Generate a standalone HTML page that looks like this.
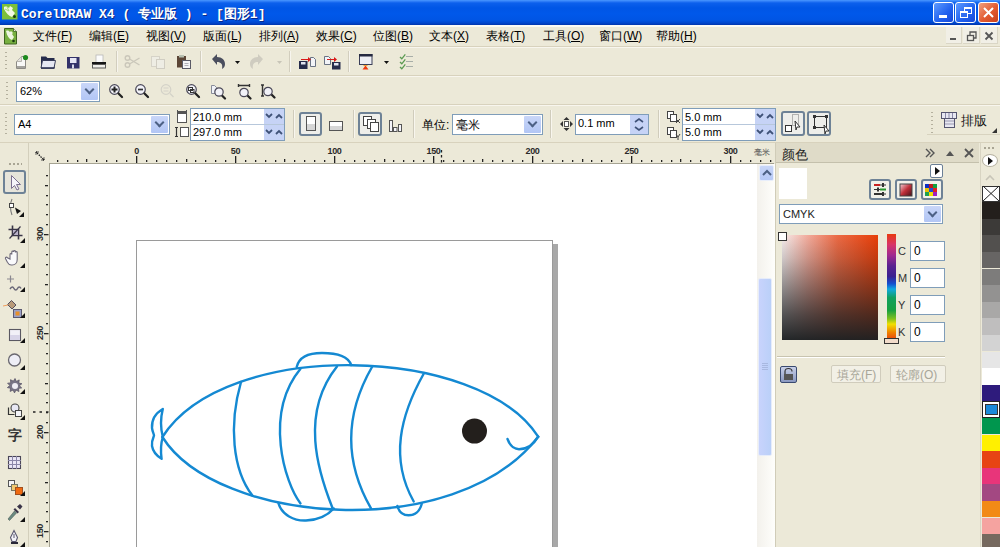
<!DOCTYPE html>
<html><head><meta charset="utf-8">
<style>
*{box-sizing:border-box;margin:0;padding:0}
html,body{width:1000px;height:547px;overflow:hidden;background:#ECE9D8;font-family:"Liberation Sans",sans-serif;font-size:12px;color:#000}
.a{position:absolute}
svg{position:absolute;overflow:visible}
#title{left:0;top:0;width:1000px;height:25px;background:linear-gradient(#4A98FF 0px,#2C7BF6 1.5px,#0C60EC 3px,#0056E6 8px,#0058EA 14px,#0055E4 20px,#0046CC 23px,#0034AC 25px)}
.ttxt{position:absolute;top:5px;font-family:"Liberation Mono",monospace;font-weight:bold;font-size:13px;color:#fff;white-space:pre;text-shadow:1px 1px 0 #0A2A8A;letter-spacing:0px}
.xpb{position:absolute;top:2px;width:21px;height:21px;border:1px solid #fff;border-radius:3px;background:linear-gradient(135deg,#5E9BFF,#2060EE 60%,#1848D8)}
.hl{position:absolute;height:1px;background:#D8D2BD}
.vl{position:absolute;width:1px;background:#D0CCBC}
.vlw{position:absolute;width:1px;background:#F8F6EE}
.grip{position:absolute;width:2px;background:repeating-linear-gradient(#B4B09E 0 1.5px,transparent 1.5px 4px)}
.combo{position:absolute;background:#fff;border:1px solid #7F9DB9}
.dd{position:absolute;right:1px;top:1px;bottom:1px;width:17px;background:linear-gradient(#C9D6F8,#B2C6F5);border-radius:1px}
.dd:after{content:"";position:absolute;left:5px;top:3px;width:5px;height:5px;border-right:2px solid #4D6185;border-bottom:2px solid #4D6185;transform:rotate(45deg)}
.menu span{position:absolute;top:27.5px;font-size:12px;white-space:pre;color:#000}
.ctext{position:absolute;font-size:12px;white-space:pre;color:#000}
.pbtn{position:absolute;border:2px solid #6E8296;border-radius:3px;background:#E3E0D3}
.rnum{position:absolute;font-size:9px;font-weight:bold;color:#2A2A2A;white-space:pre;letter-spacing:-0.3px}
.sw{position:absolute;left:982px;width:18px;height:17px}
</style></head><body>
<!-- ===== title bar ===== -->
<div id="title" class="a"></div>
<svg width="16" height="16" style="left:2px;top:4px"><rect x="0" y="0" width="15.5" height="15.5" fill="#7CC03A"/><path d="M2 3c2-1 4 0 5 1l1-2 3 2-1 2 3 3-3 4c-3-1-6-4-8-8z" fill="#F2F8E4"/><path d="M3 5l4 2M5 3l2 4" stroke="#A8D878" stroke-width="1"/><circle cx="12.5" cy="12.5" r="1.5" fill="#1A3A10"/></svg>
<div class="ttxt" style="left:21px">CorelDRAW X4 ( 专业版 ) - [图形1]</div>
<div class="xpb" style="left:933px"><div class="a" style="left:5px;top:12px;width:8px;height:3px;background:#fff"></div></div>
<div class="xpb" style="left:955px"><div class="a" style="left:8px;top:4px;width:8px;height:7px;border:1px solid #fff;border-top-width:2px"></div><div class="a" style="left:4px;top:8px;width:8px;height:7px;border:1px solid #fff;border-top-width:2px;background:#2F6DF0"></div></div>
<div class="xpb" style="left:978px;background:linear-gradient(135deg,#F0A080,#E25A30 55%,#C8401C)"><svg width="21" height="21" style="left:-1px;top:-1px"><path d="M6 6L15 15M15 6L6 15" stroke="#fff" stroke-width="2"/></svg></div>

<!-- ===== menu bar ===== -->
<div class="a" style="left:0;top:25px;width:1000px;height:1.5px;background:#FBFAF4"></div>
<div class="menu">
<svg width="14" height="17" style="left:3.5px;top:27.5px"><path d="M0.5 0.5h9l3 3v12.5h-12z" fill="#78B040" stroke="#3E6420"/><path d="M9.5 0.5v3h3" fill="#E8F0D8" stroke="#3E6420" stroke-width="0.8"/><path d="M2 3c2-1 3 0 4 1l1-1 2 2-1 1 2 3-2 3c-3-1-5-4-6-9z" fill="#EEF6E0"/><circle cx="9.5" cy="13" r="1.3" fill="#1A3A10"/></svg>
<span style="left:33px">文件(<u>F</u>)</span>
<span style="left:89px">编辑(<u>E</u>)</span>
<span style="left:146px">视图(<u>V</u>)</span>
<span style="left:203px">版面(<u>L</u>)</span>
<span style="left:259px">排列(<u>A</u>)</span>
<span style="left:316px">效果(<u>C</u>)</span>
<span style="left:373px">位图(<u>B</u>)</span>
<span style="left:429px">文本(<u>X</u>)</span>
<span style="left:486px">表格(<u>T</u>)</span>
<span style="left:543px">工具(<u>O</u>)</span>
<span style="left:599px">窗口(<u>W</u>)</span>
<span style="left:656px">帮助(<u>H</u>)</span>
</div>
<div class="a" style="left:946px;top:27px;width:16px;height:17px;background:#F1EFE6;border-right:1px solid #DAD6C6;border-bottom:1px solid #DAD6C6"></div>
<div class="a" style="left:963px;top:27px;width:17px;height:17px;background:#F1EFE6;border-right:1px solid #DAD6C6;border-bottom:1px solid #DAD6C6"></div>
<div class="a" style="left:981px;top:27px;width:17px;height:17px;background:#F1EFE6;border-right:1px solid #DAD6C6;border-bottom:1px solid #DAD6C6"></div>
<svg width="60" height="20" style="left:940px;top:26px">
<rect x="10" y="12" width="6" height="2" fill="#555"/>
<rect x="27.5" y="9.5" width="6" height="5" fill="none" stroke="#555" stroke-width="1.3"/><path d="M30 9V6h6v6h-2" fill="none" stroke="#555" stroke-width="1.3"/>
<path d="M45.5 6.5l7 7M52.5 6.5l-7 7" stroke="#555" stroke-width="1.8"/>
</svg>

<!-- ===== toolbar lines ===== -->
<div class="hl" style="left:0;top:46px;width:1000px;background:#D8D2BD"></div>
<div class="hl" style="left:0;top:47px;width:1000px;background:#F8F6EE"></div>
<div class="hl" style="left:0;top:75px;width:1000px"></div>
<div class="hl" style="left:0;top:76px;width:1000px;background:#F8F6EE"></div>
<div class="hl" style="left:0;top:104px;width:1000px"></div>
<div class="hl" style="left:0;top:105px;width:1000px;background:#F8F6EE"></div>
<div class="hl" style="left:0;top:142px;width:1000px"></div>
<div class="grip" style="left:5px;top:52px;height:18px"></div>
<div class="grip" style="left:6px;top:82px;height:18px"></div>
<div class="grip" style="left:5px;top:113px;height:22px"></div>

<!-- std toolbar icons -->
<svg width="420" height="30" style="left:0;top:47px">
 <!-- new -->
 <path d="M16.5 14.5l5-5h4v12h-9z" fill="#F8F8F6" stroke="#8C8A84" stroke-width="1"/>
 <path d="M17 20h8" stroke="#6A6862" stroke-width="1.2"/>
 <path d="M16.5 14.5h5v-5" fill="#E4E2DC" stroke="#A8A6A0" stroke-width="0.8"/>
 <circle cx="25.5" cy="10.5" r="2.6" fill="#1E8A1E"/>
 <!-- open -->
 <path d="M41 9.5h5l1.5 1.5h7v10.5H41z" fill="#262C4C"/>
 <path d="M42.5 13.5h13l-1.5 7.5H41z" fill="#E6E8F2" stroke="#2C3250" stroke-width="0.9"/>
 <path d="M41 21h13.5" stroke="#262C4C" stroke-width="1.2"/>
 <!-- save -->
 <rect x="67" y="10" width="12.5" height="11.5" fill="#33326A"/>
 <rect x="70" y="11" width="6.5" height="5" fill="#E6E6F4"/>
 <rect x="72" y="17.5" width="2" height="4" fill="#D8D8E8"/>
 <!-- print -->
 <rect x="96" y="8" width="7" height="7.5" fill="#FBFBFB" stroke="#B8B8B8" stroke-width="0.8"/>
 <rect x="92" y="15" width="14" height="2.5" fill="#151515"/>
 <rect x="92.5" y="17.5" width="13" height="3.5" fill="#F0EFEA" stroke="#5A5A58" stroke-width="1"/>
 <line x1="116.5" y1="4" x2="116.5" y2="25" stroke="#D2CEBE"/><line x1="117.5" y1="4" x2="117.5" y2="25" stroke="#F7F5EE"/>
 <!-- cut disabled -->
 <g stroke="#CAC7BA" fill="none" stroke-width="1.4"><circle cx="127.5" cy="11" r="2.3"/><circle cx="127.5" cy="18" r="2.3"/><path d="M129.5 12l10 6M129.5 17l10-6"/></g>
 <!-- copy disabled -->
 <rect x="151.5" y="9.5" width="8" height="10" fill="#EEEDE4" stroke="#D6D3C8"/><rect x="156.5" y="12.5" width="8" height="9" fill="#EEEDE4" stroke="#D0CDC2"/>
 <!-- paste -->
 <rect x="177" y="9" width="9" height="11.5" fill="#5C4636"/><rect x="179" y="8" width="5" height="2.5" fill="#B8C0B0"/>
 <rect x="182.5" y="13.5" width="8" height="8" fill="#F4F4F6" stroke="#5A5A66"/><path d="M184.5 16.5h4M184.5 18.5h4" stroke="#B0B0B8"/>
 <line x1="200.5" y1="4" x2="200.5" y2="25" stroke="#D2CEBE"/><line x1="201.5" y1="4" x2="201.5" y2="25" stroke="#F7F5EE"/>
 <!-- undo -->
 <path d="M212 12l5-5v3c5 0 8 3 8 7 0 2-1 4-3 5 1-5-1-7-5-7v3z" fill="#4A4E5E"/>
 <path d="M235 14h5l-2.5 3z" fill="#111"/>
 <!-- redo disabled -->
 <path d="M263 12l-5-5v3c-5 0-8 3-8 7 0 2 1 4 3 5-1-5 1-7 5-7v3z" fill="#CFCCC0"/>
 <path d="M277 14h5l-2.5 3z" fill="#C8C5B8"/>
 <line x1="289.5" y1="4" x2="289.5" y2="25" stroke="#D2CEBE"/><line x1="290.5" y1="4" x2="290.5" y2="25" stroke="#F7F5EE"/>
 <!-- import -->
 <path d="M310.5 10.5h3l2 2v7h-5z" fill="#F2F4F8" stroke="#5A6478" stroke-width="0.9"/>
 <rect x="299" y="14" width="8.5" height="8" fill="#262C4C"/><rect x="301" y="15" width="4.5" height="2.5" fill="#E0E4F0"/>
 <path d="M301 12h7v-2l3 2.5-3 2.5v-2h-7z" fill="#D81818"/>
 <!-- export -->
 <path d="M324.5 9.5h4l2 2v6h-6z" fill="#F2F4F8" stroke="#5A6478" stroke-width="0.9"/>
 <rect x="332" y="15" width="8.5" height="7.5" fill="#262C4C"/><rect x="334" y="16" width="4.5" height="2.5" fill="#E0E4F0"/>
 <path d="M327 12h7v-2l3 2.5-3 2.5v-2h-7z" fill="#D81818"/>
 <line x1="348.5" y1="4" x2="348.5" y2="25" stroke="#D2CEBE"/><line x1="349.5" y1="4" x2="349.5" y2="25" stroke="#F7F5EE"/>
 <!-- app launcher -->
 <rect x="359.5" y="7.5" width="12.5" height="10" fill="#EEEFF4" stroke="#3A3E58" stroke-width="1"/>
 <rect x="359" y="7" width="13.5" height="2.5" fill="#262A40"/>
 <path d="M362.5 22.5l3-4 3 4z" fill="#F03A10"/><path d="M363.5 18.5h4" stroke="#F0A030" stroke-width="1"/>
 <path d="M384 14h5l-2.5 3z" fill="#111"/>
 <!-- checklist -->
 <g stroke="#5A9A50" stroke-width="1.3" fill="none"><path d="M400 10l1.8 1.8 3.5-4.5M400 15l1.8 1.8 3.5-4.5M400 20l1.8 1.8 3.5-4.5"/></g>
 <g stroke="#A8AEA8" stroke-width="1.2"><path d="M406 9.5h7M406 14.5h7M406 19.5h7"/></g>
</svg>

<!-- zoom toolbar -->
<div class="combo" style="left:16px;top:81px;width:84px;height:21px"><div class="dd"></div><span class="ctext" style="left:3px;top:3px;font-size:11px">62%</span></div>
<svg width="300" height="30" style="left:0;top:80px">
 <g fill="#F2F2F8" stroke="#4A4858" stroke-width="1.2">
  <circle cx="114.5" cy="9.5" r="4.8"/><circle cx="140.5" cy="9.5" r="4.8"/><circle cx="191.5" cy="9.5" r="4.8"/>
 </g>
 <g stroke="#222" stroke-width="2.2" stroke-linecap="round"><path d="M118.5 13.5l3.5 3.5M144.5 13.5l3.5 3.5M195.5 13.5l3.5 3.5M222 15.5l3 3M247.5 15.5l3 3M271.5 14.5l3 3"/></g>
 <path d="M111.5 9.5h6M114.5 6.5v6" stroke="#222" stroke-width="2"/>
 <path d="M138 9.5h5" stroke="#333" stroke-width="1.7"/>
 <g fill="none" stroke="#D4D2C8" stroke-width="1.2"><circle cx="166" cy="9.5" r="4.8"/><path d="M170 13.5l3.5 3.5M163.5 8h5M163.5 11h5" /></g>
 <rect x="188.5" y="7.5" width="4" height="3" fill="none" stroke="#333" stroke-width="1"/><rect x="190.5" y="9.5" width="3.5" height="3" fill="none" stroke="#333" stroke-width="1"/>
 <path d="M211.5 5.5h3l2 2v6h-5z" fill="#F0F2F8" stroke="#7A8090" stroke-width="0.9"/>
 <circle cx="219" cy="12" r="4.2" fill="#F2F2F8" stroke="#4A4858" stroke-width="1.2"/>
 <path d="M238 5.5h12M238.5 4v3M249.5 4v3" stroke="#333" stroke-width="1.4"/>
 <circle cx="244" cy="12.5" r="4.2" fill="#F2F2F8" stroke="#4A4858" stroke-width="1.2"/>
 <path d="M262.5 5v11M261 5h3M261 16h3" stroke="#333" stroke-width="1.4"/>
 <circle cx="268" cy="11.5" r="4.2" fill="#F2F2F8" stroke="#4A4858" stroke-width="1.2"/>
</svg>

<!-- property bar -->
<div class="combo" style="left:14px;top:114px;width:156px;height:21px"><div class="dd"></div><span class="ctext" style="left:3px;top:3px;font-size:11px">A4</span></div>
<svg width="20" height="32" style="left:174px;top:108px">
 <rect x="3.5" y="5.5" width="9" height="9" fill="#fff" stroke="#555"/><rect x="3" y="3" width="10" height="2" fill="#555"/><path d="M3.5 2v4M12.5 2v4" stroke="#555"/>
 <rect x="6.5" y="19.5" width="8" height="9" fill="#fff" stroke="#555"/><path d="M2.5 19v10M1 19.5h3M1 28.5h3" stroke="#333" stroke-width="1.2"/>
</svg>
<div class="combo" style="left:190px;top:108px;width:95px;height:33px;border-color:#7F9DB9"></div>
<div class="a" style="left:191px;top:124px;width:93px;height:1px;background:#B7C7DB"></div>
<span class="ctext" style="left:193px;top:111px;font-size:11px">210.0 mm</span>
<span class="ctext" style="left:193px;top:126px;font-size:11px">297.0 mm</span>
<svg width="22" height="32" style="left:264px;top:109px">
 <rect x="0" y="0" width="20" height="15" fill="#C6D3F6"/><rect x="0" y="16" width="20" height="15" fill="#C6D3F6"/>
 <path d="M2 5l3 3 3-3M12 9l3-3 3 3M2 21l3 3 3-3M12 25l3-3 3 3" fill="none" stroke="#3F5278" stroke-width="1.8"/>
</svg>
<div class="vl" style="left:293px;top:110px;height:28px"></div><div class="vlw" style="left:294px;top:110px;height:28px"></div>
<div class="pbtn" style="left:299px;top:112px;width:23px;height:24px;background:#EEEEEA"></div>
<svg width="80" height="30" style="left:299px;top:110px">
 <rect x="7.5" y="6.5" width="9" height="14" fill="#fff" stroke="#555"/><rect x="8" y="14" width="8" height="6" fill="#D6D6D6"/>
 <rect x="30.5" y="11.5" width="13" height="9" fill="#fff" stroke="#555"/><rect x="31" y="16" width="12" height="4" fill="#D6D6D6"/>
</svg>
<div class="vl" style="left:353px;top:110px;height:28px"></div><div class="vlw" style="left:354px;top:110px;height:28px"></div>
<div class="pbtn" style="left:358px;top:112px;width:24px;height:24px;background:#EEEEEA"></div>
<svg width="60" height="30" style="left:358px;top:110px">
 <rect x="5.5" y="6.5" width="8" height="9" fill="#fff" stroke="#444"/><rect x="9.5" y="9.5" width="8" height="9" fill="#fff" stroke="#444"/><rect x="12.5" y="12.5" width="8" height="9" fill="#fff" stroke="#444"/>
 <rect x="31.5" y="10.5" width="3" height="11" fill="#F4F4FA" stroke="#555"/><rect x="35.5" y="17.5" width="3.5" height="4" fill="#F4F4FA" stroke="#555"/><rect x="40.5" y="14.5" width="3" height="7" fill="#F4F4FA" stroke="#555"/>
</svg>
<div class="vl" style="left:413px;top:110px;height:28px"></div><div class="vlw" style="left:414px;top:110px;height:28px"></div>
<span class="ctext" style="left:422px;top:117px">单位:</span>
<div class="combo" style="left:452px;top:114px;width:91px;height:21px"><div class="dd"></div><span class="ctext" style="left:3px;top:2px">毫米</span></div>
<div class="vl" style="left:550px;top:110px;height:28px"></div><div class="vlw" style="left:551px;top:110px;height:28px"></div>
<svg width="16" height="16" style="left:559px;top:116px">
 <path d="M7.5 1l3 3h-6zM7.5 15l3-3h-6zM1 8l3-3v6zM14 8l-3-3v6z" fill="#333"/><rect x="5.5" y="5.5" width="4" height="5" fill="#fff" stroke="#555"/>
</svg>
<div class="combo" style="left:575px;top:114px;width:74px;height:21px"></div>
<span class="ctext" style="left:578px;top:117px;font-size:11px">0.1 mm</span>
<svg width="20" height="19" style="left:630px;top:115px">
 <rect x="0" y="0" width="18" height="19" fill="#C6D3F6"/>
 <path d="M5 7l4-3 4 3M5 12l4 3 4-3" fill="none" stroke="#3F5278" stroke-width="1.6"/>
</svg>
<div class="vl" style="left:658px;top:110px;height:28px"></div><div class="vlw" style="left:659px;top:110px;height:28px"></div>
<svg width="20" height="32" style="left:665px;top:109px">
 <rect x="2.5" y="2.5" width="6" height="7" fill="#fff" stroke="#444"/><rect x="5.5" y="5.5" width="6" height="7" fill="#fff" stroke="#444"/><path d="M11 10l4 4M15 10l-4 4" stroke="#444"/>
 <rect x="2.5" y="18.5" width="6" height="7" fill="#fff" stroke="#444"/><rect x="5.5" y="21.5" width="6" height="7" fill="#fff" stroke="#444"/><path d="M11 25l2 3 2-3M13 28v3" stroke="#444" fill="none"/>
</svg>
<div class="combo" style="left:682px;top:108px;width:94px;height:33px"></div>
<div class="a" style="left:683px;top:124px;width:92px;height:1px;background:#B7C7DB"></div>
<span class="ctext" style="left:685px;top:111px;font-size:11px">5.0 mm</span>
<span class="ctext" style="left:685px;top:126px;font-size:11px">5.0 mm</span>
<svg width="22" height="32" style="left:755px;top:109px">
 <rect x="0" y="0" width="20" height="15" fill="#C6D3F6"/><rect x="0" y="16" width="20" height="15" fill="#C6D3F6"/>
 <path d="M2 5l3 3 3-3M12 9l3-3 3 3M2 21l3 3 3-3M12 25l3-3 3 3" fill="none" stroke="#3F5278" stroke-width="1.8"/>
</svg>
<div class="pbtn" style="left:781px;top:111px;width:24px;height:25px;background:#EEEEEA"></div>
<div class="pbtn" style="left:807px;top:111px;width:24px;height:25px;background:#EEEEEA"></div>
<svg width="60" height="30" style="left:781px;top:109px">
 <rect x="4.5" y="16.5" width="6" height="6" fill="#fff" stroke="#333"/><rect x="11.5" y="5.5" width="6" height="11" fill="none" stroke="#777" stroke-dasharray="1 1"/><path d="M14 12l5 6-3 0-1 3z" fill="#fff" stroke="#333"/>
 <rect x="33.5" y="7.5" width="12" height="11" fill="none" stroke="#333"/><g fill="#333"><rect x="32" y="6" width="3" height="3"/><rect x="44" y="6" width="3" height="3"/><rect x="32" y="17" width="3" height="3"/></g><path d="M43 16l5 6-3 0-1 3z" fill="#fff" stroke="#333"/>
</svg>
<div class="grip" style="left:931px;top:112px;height:22px"></div>
<div class="a" style="left:927px;top:134px;width:73px;height:1px;background:#D8D3BF"></div>
<svg width="20" height="20" style="left:940px;top:110px">
 <rect x="1.5" y="2.5" width="15" height="6" fill="#E8E8F2" stroke="#555570"/><path d="M5.5 3v5M9 3v5M12.5 3v5" stroke="#8A88A8"/>
 <rect x="4.5" y="8.5" width="10" height="9" fill="#E8E8F2" stroke="#555570"/><path d="M5 11h9M5 14h9" stroke="#9A98B0"/>
</svg>
<span class="ctext" style="left:961px;top:112px;font-size:13px;color:#111">排版</span>
<svg width="6" height="6" style="left:992px;top:128px"><path d="M5 0v5H0z" fill="#333"/></svg>


<!-- ===== toolbox ===== -->
<div class="a" style="left:28px;top:143px;width:1px;height:404px;background:#D3CFBC"></div>
<div class="a" style="left:9px;top:163px;width:13px;height:2px;background:repeating-linear-gradient(90deg,#A9A594 0 2px,transparent 2px 4px)"></div>
<div class="pbtn" style="left:3px;top:170px;width:23px;height:24px;background:#E6E4DA"></div>
<svg width="30" height="547" style="left:0;top:0">
 <!-- select arrow -->
 <path d="M11.5 175.5v13l3-3 2.5 4.5 2-1-2.5-4.5h4z" fill="#F6F4FA" stroke="#7B6F90" stroke-width="1" stroke-linejoin="round"/>
 <!-- shape tool -->
 <path d="M12 199C10 203 10 210 12 215" fill="none" stroke="#7A7A7A" stroke-width="1.1"/>
 <rect x="9.5" y="203.5" width="4" height="4" fill="#fff" stroke="#444"/>
 <path d="M15 207.5l6 3.5-4 3z" fill="#111"/>
 <!-- crop -->
 <path d="M8.5 229.5h10v10M12.5 225.5v10h10" fill="none" stroke="#3A3648" stroke-width="1.6"/>
 <rect x="13" y="230" width="5" height="5" fill="#B8B0C8"/>
 <path d="M20.5 226.5l-11 12" stroke="#3A3648" stroke-width="1.2"/>
 <!-- hand -->
 <path d="M10 259v-4.5c0-1.2 1.8-1.2 1.8 0v-2.5c0-1.2 1.8-1.2 1.8 0v-0.5c0-1.2 1.8-1.2 1.8 0v1c0-1.2 1.8-1.2 1.8 0v7c0 3-2 5.5-5 5.5h-1c-1.8 0-2.8-1-3.8-2.8l-1.8-3.5c-0.6-1.4 1-2.2 1.8-1z" fill="#FAFAFC" stroke="#6E6A7A" stroke-width="1.1"/>
 <!-- freehand -->
 <path d="M7 279h7M10.5 275.5v7" stroke="#8A8890" stroke-width="1.2"/>
 <path d="M10 289c1.5-2.5 3-2.5 4-0.5s2.5 2 3.5 0 2.5-2 3.5 0" fill="none" stroke="#6A6878" stroke-width="1.5"/>
 <!-- smart fill -->
 <path d="M7.5 304.5l4-4 4.5 4.5-4 4z" fill="#B89A7A" stroke="#555060" stroke-width="1"/>
 <path d="M3 306l5-1" stroke="#F0A060" stroke-width="1"/>
 <rect x="13.5" y="309.5" width="8" height="8" fill="#9AA0C8" stroke="#5A5870" stroke-width="1"/><rect x="15.5" y="311.5" width="4" height="4" fill="#E8902A"/>
 <!-- rectangle -->
 <rect x="9.5" y="329.5" width="11" height="11" fill="#F2F0F8" stroke="#5A5862" stroke-width="1.1"/><rect x="10" y="335" width="10" height="5" fill="#D8D4E8"/>
 <!-- ellipse -->
 <circle cx="14.5" cy="360" r="6" fill="#EEEEF6" stroke="#6A6870" stroke-width="1.3"/>
 <!-- star -->
 <path d="M15 378.5l1.4 3 2.8-1.6-0.5 3.2 3.2 0.6-2.6 2 2.4 2.2-3.2 0.4 0.4 3.2-2.9-1.5-1.5 2.9-1.4-2.9-3 1.4 0.5-3.2-3.2-0.6 2.5-2.1-2.3-2.3 3.2-0.3-0.3-3.2 2.9 1.5z" fill="#7A7688" stroke="#5A5668" stroke-width="0.8"/>
 <circle cx="15" cy="386" r="3" fill="#F0EEF6"/>
 <!-- basic shapes -->
 <circle cx="15" cy="408" r="4" fill="#E8E8F4" stroke="#444" stroke-width="1.1"/>
 <path d="M8.5 407.5v7h6" fill="none" stroke="#333" stroke-width="1.2"/>
 <rect x="15.5" y="410.5" width="6" height="6" fill="#F4F4F8" stroke="#444" stroke-width="1"/>
 <!-- table -->
 <rect x="8.5" y="456.5" width="12" height="12" fill="#EAE6F6" stroke="#4A4658" stroke-width="1.1"/><path d="M8 460.5h13M8 464.5h13M12.5 456v13M16.5 456v13" stroke="#8A86A8" stroke-width="1"/>
 <!-- interactive -->
 <rect x="8.5" y="480.5" width="6" height="6" fill="#F4F4F8" stroke="#555"/><rect x="11.5" y="484.5" width="6" height="6" fill="#F0C870" stroke="#776"/><rect x="15.5" y="487.5" width="7" height="7" fill="#F06A10" stroke="#A05020"/>
 <!-- eyedropper -->
 <path d="M17 506.5l3-2.5 2.5 2.5-2.5 3z" fill="#3A3448"/><path d="M15 508l4 4-1.5 1.5-4-4z" fill="#3A3448"/>
 <path d="M14.5 511l2 2-7 7.5-1.5-1.5z" fill="#6A8A80" stroke="#4A5A58" stroke-width="0.6"/>
 <!-- pen -->
 <path d="M14 530.5l3.5 7-1.5 4h-4l-1.5-4z" fill="#F2F2F8" stroke="#5A5870" stroke-width="1.1"/><path d="M14 534v4" stroke="#5A5870"/><rect x="11" y="542" width="7" height="2" fill="#2A2838"/>
 <!-- corner triangles -->
 <g fill="#111">
  <path d="M24 212v5h-5z"/><path d="M25 238v5h-5z"/><path d="M25 263v5h-5z"/><path d="M25 287v5h-5z"/><path d="M25 313v5h-5z"/><path d="M25 338v5h-5z"/><path d="M25 365v5h-5z"/><path d="M25 389v5h-5z"/><path d="M25 415v5h-5z"/><path d="M25 491v5h-5z"/><path d="M25 517v5h-5z"/><path d="M25 542v5h-5z"/>
 </g>
</svg>
<span class="a" style="left:8px;top:427px;font-size:14px;color:#333;font-weight:bold">字</span>

<!-- ===== rulers ===== -->
<div class="a" style="left:29px;top:143px;width:746px;height:21px;background:#ECE9D8"></div>
<div class="a" style="left:49px;top:163px;width:725px;height:1px;background:#A5A392"></div>
<div class="a" style="left:49px;top:163px;width:1px;height:384px;background:#A5A392"></div>
<svg width="1000" height="547" style="left:0;top:0"><rect x="57" y="160" width="1.3" height="2" fill="#222"/><rect x="67" y="160" width="1.3" height="2" fill="#222"/><rect x="77" y="160" width="1.3" height="2" fill="#222"/><rect x="86" y="159" width="1.3" height="3" fill="#222"/><rect x="96" y="160" width="1.3" height="2" fill="#222"/><rect x="106" y="160" width="1.3" height="2" fill="#222"/><rect x="116" y="160" width="1.3" height="2" fill="#222"/><rect x="126" y="160" width="1.3" height="2" fill="#222"/><rect x="136" y="156" width="1.3" height="7" fill="#222"/><rect x="146" y="160" width="1.3" height="2" fill="#222"/><rect x="156" y="160" width="1.3" height="2" fill="#222"/><rect x="166" y="160" width="1.3" height="2" fill="#222"/><rect x="176" y="160" width="1.3" height="2" fill="#222"/><rect x="186" y="159" width="1.3" height="3" fill="#222"/><rect x="195" y="160" width="1.3" height="2" fill="#222"/><rect x="205" y="160" width="1.3" height="2" fill="#222"/><rect x="215" y="160" width="1.3" height="2" fill="#222"/><rect x="225" y="160" width="1.3" height="2" fill="#222"/><rect x="235" y="156" width="1.3" height="7" fill="#222"/><rect x="245" y="160" width="1.3" height="2" fill="#222"/><rect x="255" y="160" width="1.3" height="2" fill="#222"/><rect x="265" y="160" width="1.3" height="2" fill="#222"/><rect x="275" y="160" width="1.3" height="2" fill="#222"/><rect x="284" y="159" width="1.3" height="3" fill="#222"/><rect x="294" y="160" width="1.3" height="2" fill="#222"/><rect x="304" y="160" width="1.3" height="2" fill="#222"/><rect x="314" y="160" width="1.3" height="2" fill="#222"/><rect x="324" y="160" width="1.3" height="2" fill="#222"/><rect x="334" y="156" width="1.3" height="7" fill="#222"/><rect x="344" y="160" width="1.3" height="2" fill="#222"/><rect x="354" y="160" width="1.3" height="2" fill="#222"/><rect x="364" y="160" width="1.3" height="2" fill="#222"/><rect x="374" y="160" width="1.3" height="2" fill="#222"/><rect x="384" y="159" width="1.3" height="3" fill="#222"/><rect x="393" y="160" width="1.3" height="2" fill="#222"/><rect x="403" y="160" width="1.3" height="2" fill="#222"/><rect x="413" y="160" width="1.3" height="2" fill="#222"/><rect x="423" y="160" width="1.3" height="2" fill="#222"/><rect x="433" y="156" width="1.3" height="7" fill="#222"/><rect x="443" y="160" width="1.3" height="2" fill="#222"/><rect x="453" y="160" width="1.3" height="2" fill="#222"/><rect x="463" y="160" width="1.3" height="2" fill="#222"/><rect x="473" y="160" width="1.3" height="2" fill="#222"/><rect x="482" y="159" width="1.3" height="3" fill="#222"/><rect x="492" y="160" width="1.3" height="2" fill="#222"/><rect x="502" y="160" width="1.3" height="2" fill="#222"/><rect x="512" y="160" width="1.3" height="2" fill="#222"/><rect x="522" y="160" width="1.3" height="2" fill="#222"/><rect x="532" y="156" width="1.3" height="7" fill="#222"/><rect x="542" y="160" width="1.3" height="2" fill="#222"/><rect x="552" y="160" width="1.3" height="2" fill="#222"/><rect x="562" y="160" width="1.3" height="2" fill="#222"/><rect x="572" y="160" width="1.3" height="2" fill="#222"/><rect x="582" y="159" width="1.3" height="3" fill="#222"/><rect x="591" y="160" width="1.3" height="2" fill="#222"/><rect x="601" y="160" width="1.3" height="2" fill="#222"/><rect x="611" y="160" width="1.3" height="2" fill="#222"/><rect x="621" y="160" width="1.3" height="2" fill="#222"/><rect x="631" y="156" width="1.3" height="7" fill="#222"/><rect x="641" y="160" width="1.3" height="2" fill="#222"/><rect x="651" y="160" width="1.3" height="2" fill="#222"/><rect x="661" y="160" width="1.3" height="2" fill="#222"/><rect x="671" y="160" width="1.3" height="2" fill="#222"/><rect x="680" y="159" width="1.3" height="3" fill="#222"/><rect x="690" y="160" width="1.3" height="2" fill="#222"/><rect x="700" y="160" width="1.3" height="2" fill="#222"/><rect x="710" y="160" width="1.3" height="2" fill="#222"/><rect x="720" y="160" width="1.3" height="2" fill="#222"/><rect x="730" y="156" width="1.3" height="7" fill="#222"/><rect x="740" y="160" width="1.3" height="2" fill="#222"/><rect x="750" y="160" width="1.3" height="2" fill="#222"/><rect x="760" y="160" width="1.3" height="2" fill="#222"/><rect x="770" y="160" width="1.3" height="2" fill="#222"/><rect x="46" y="175" width="2" height="1.3" fill="#222"/><rect x="45" y="185" width="3" height="1.3" fill="#222"/><rect x="46" y="195" width="2" height="1.3" fill="#222"/><rect x="46" y="204" width="2" height="1.3" fill="#222"/><rect x="46" y="214" width="2" height="1.3" fill="#222"/><rect x="46" y="224" width="2" height="1.3" fill="#222"/><rect x="44" y="234" width="4.5" height="1.3" fill="#222"/><rect x="46" y="244" width="2" height="1.3" fill="#222"/><rect x="46" y="254" width="2" height="1.3" fill="#222"/><rect x="46" y="264" width="2" height="1.3" fill="#222"/><rect x="46" y="274" width="2" height="1.3" fill="#222"/><rect x="45" y="284" width="3" height="1.3" fill="#222"/><rect x="46" y="294" width="2" height="1.3" fill="#222"/><rect x="46" y="304" width="2" height="1.3" fill="#222"/><rect x="46" y="313" width="2" height="1.3" fill="#222"/><rect x="46" y="323" width="2" height="1.3" fill="#222"/><rect x="44" y="333" width="4.5" height="1.3" fill="#222"/><rect x="46" y="343" width="2" height="1.3" fill="#222"/><rect x="46" y="353" width="2" height="1.3" fill="#222"/><rect x="46" y="363" width="2" height="1.3" fill="#222"/><rect x="46" y="373" width="2" height="1.3" fill="#222"/><rect x="45" y="383" width="3" height="1.3" fill="#222"/><rect x="46" y="393" width="2" height="1.3" fill="#222"/><rect x="46" y="402" width="2" height="1.3" fill="#222"/><rect x="46" y="412" width="2" height="1.3" fill="#222"/><rect x="46" y="422" width="2" height="1.3" fill="#222"/><rect x="44" y="432" width="4.5" height="1.3" fill="#222"/><rect x="46" y="442" width="2" height="1.3" fill="#222"/><rect x="46" y="452" width="2" height="1.3" fill="#222"/><rect x="46" y="462" width="2" height="1.3" fill="#222"/><rect x="46" y="472" width="2" height="1.3" fill="#222"/><rect x="45" y="482" width="3" height="1.3" fill="#222"/><rect x="46" y="492" width="2" height="1.3" fill="#222"/><rect x="46" y="502" width="2" height="1.3" fill="#222"/><rect x="46" y="511" width="2" height="1.3" fill="#222"/><rect x="46" y="521" width="2" height="1.3" fill="#222"/><rect x="44" y="531" width="4.5" height="1.3" fill="#222"/><rect x="46" y="541" width="2" height="1.3" fill="#222"/></svg>
<span class="rnum" style="left:116.5px;top:146px;width:40px;text-align:center">0</span>
<span class="rnum" style="left:215.5px;top:146px;width:40px;text-align:center">50</span>
<span class="rnum" style="left:314.5px;top:146px;width:40px;text-align:center">100</span>
<span class="rnum" style="left:413.5px;top:146px;width:40px;text-align:center">150</span>
<span class="rnum" style="left:512.5px;top:146px;width:40px;text-align:center">200</span>
<span class="rnum" style="left:611.5px;top:146px;width:40px;text-align:center">250</span>
<span class="rnum" style="left:710.5px;top:146px;width:40px;text-align:center">300</span>
<span class="rnum" style="left:20px;top:228.7px;width:40px;text-align:center;transform:rotate(-90deg)">300</span>
<span class="rnum" style="left:20px;top:327.7px;width:40px;text-align:center;transform:rotate(-90deg)">250</span>
<span class="rnum" style="left:20px;top:426.7px;width:40px;text-align:center;transform:rotate(-90deg)">200</span>
<span class="rnum" style="left:20px;top:525.7px;width:40px;text-align:center;transform:rotate(-90deg)">150</span>
<span class="rnum" style="left:754px;top:147px;font-size:8px;font-weight:normal;color:#555">毫米</span>
<svg width="12" height="12" style="left:35px;top:151px"><path d="M1 1h3M1 1v3M9 9h-3M9 9v-3M2 2l7 7" stroke="#222" stroke-width="1.3" stroke-dasharray="1.5 1"/></svg>
<svg width="4" height="16" style="left:440px;top:149px"><path d="M1.5 1v2.5M1.5 6v2.5M1.5 11v2.5" stroke="#222" stroke-width="1.3"/></svg>
<svg width="20" height="3" style="left:30px;top:411px"><path d="M3 1h2.5M9.5 1h2.5M16 1h2.5" stroke="#222" stroke-width="1.3"/></svg>
<!-- ===== canvas ===== -->
<div class="a" style="left:50px;top:164px;width:707px;height:383px;background:#fff"></div>
<div class="a" style="left:552px;top:244px;width:6px;height:303px;background:#A8A8A8"></div>
<div class="a" style="left:136px;top:240px;width:417px;height:310px;border:1px solid #9A9A9A;background:#fff"></div>
<svg width="1000" height="547" style="left:0;top:0">
<g fill="none" stroke="#1489D2" stroke-width="2.4" stroke-linecap="round" stroke-linejoin="round">
 <path d="M162.4 437C225.9 337.7 479.7 344.9 538.2 436.7"/>
 <path d="M162.4 437C216.7 523.8 455.1 544.4 538.2 436.7"/>
 <path d="M241 382C228.7 424.8 232.5 469.5 252.2 495.2"/>
 <path d="M300.5 368.8C263.5 413.8 284.8 483.1 300.5 503.4"/>
 <path d="M337 366.5C299.8 413.2 317.8 471 332.5 508"/>
 <path d="M372 367C345 414 344 461.4 371 508.4"/>
 <path d="M424.1 373C400 415.8 389.7 458.7 413.7 501.5"/>
 <path d="M162.8 409C156 413 151.5 420 152 428C152.5 432 154 434 154 435.6C153 438 151.5 441 152 446C153 452 157 456 161.6 458.8C160.5 451 161 443 162.8 437C160.5 428 160.5 418 162.8 409Z"/>
 <path d="M296.7 367C299 357 308 353 322 353C338 353 348 356 351.2 365"/>
 <path d="M278.5 503.4C282 515 294 521 306 520.5C318 520 328 515 333.8 508.4"/>
 <path d="M397.4 506C399 512 403 515.3 408.5 515.3C415 515.3 420 511 421.7 504"/>
 <path d="M507.5 439C510 446 514 449.2 519 449.2C527 449.2 534 444 538.2 436.7"/>
</g>
<circle cx="474.5" cy="431.1" r="12.5" fill="#231F1C"/>
</svg>


<!-- ===== vscroll ===== -->
<div class="a" style="left:757px;top:164px;width:18px;height:383px;background:linear-gradient(90deg,#F3F1EC,#FEFEFB)"></div>
<div class="a" style="left:759px;top:165px;width:15px;height:16px;background:linear-gradient(#C8D6F8,#B6C9F6);border:1px solid #E8EEFB;border-radius:2px"></div>
<svg width="16" height="16" style="left:759px;top:165px"><path d="M4 10l4-4 4 4" fill="none" stroke="#4D6185" stroke-width="2"/></svg>
<div class="a" style="left:758px;top:278px;width:14px;height:178px;background:linear-gradient(90deg,#C8D3FC,#BAD0F8);border:1px solid #E6ECFA;border-radius:2px"></div>


<svg width="14" height="10" style="left:758px;top:362px"><path d="M4 1.5h6M4 3.5h6M4 5.5h6M4 7.5h6" stroke="#A8B8E0" stroke-width="1"/></svg>
<!-- ===== docker ===== -->
<div class="a" style="left:775px;top:143px;width:205px;height:404px;background:#ECE9D8;border-left:1px solid #D0CCB8"></div>
<div class="a" style="left:776px;top:143px;width:203px;height:20px;background:#DFDBC8;border-bottom:1px solid #C4C0AC"></div>
<span class="a" style="left:782px;top:146px;font-size:13px;color:#222">颜色</span>
<svg width="60" height="14" style="left:924px;top:146px">
 <path d="M2 3l4 4-4 4M6 3l4 4-4 4" fill="none" stroke="#555" stroke-width="1.4"/>
 <path d="M22 10l4-5 4 5z" fill="#555"/>
 <path d="M41 3l8 8M49 3l-8 8" stroke="#555" stroke-width="1.8"/>
</svg>
<div class="a" style="left:779px;top:168px;width:28px;height:31px;background:#fff"></div>
<div class="a" style="left:930px;top:164px;width:13px;height:14px;border:1px solid #6B7F96;border-radius:2px;background:#fff"></div>
<svg width="8" height="8" style="left:934px;top:167px"><path d="M1 0l5 4-5 4z" fill="#111"/></svg>
<div class="pbtn" style="left:869px;top:179px;width:22px;height:21px;background:#F2F1EA"></div>
<div class="pbtn" style="left:895px;top:179px;width:22px;height:21px;background:#F2F1EA"></div>
<div class="pbtn" style="left:921px;top:179px;width:22px;height:21px;background:#F2F1EA"></div>
<svg width="80" height="22" style="left:869px;top:179px">
 <path d="M5 6h12M5 10.5h12M5 15h12" stroke="#333" stroke-width="1"/><path d="M5 6h6" stroke="#C82020" stroke-width="2"/><path d="M11 10.5h6" stroke="#2A9A30" stroke-width="2"/><path d="M5 15h8" stroke="#333" stroke-width="2"/>
 <rect x="13" y="4" width="2" height="4" fill="#333"/><rect x="8" y="8.5" width="2" height="4" fill="#333"/><rect x="13" y="13" width="2" height="4" fill="#333"/>
 <defs><linearGradient id="g1" x1="0" y1="0" x2="1" y2="1"><stop offset="0" stop-color="#F4D0D8"/><stop offset=".5" stop-color="#C0303A"/><stop offset="1" stop-color="#401018"/></linearGradient></defs>
 <rect x="31" y="5" width="12" height="12" fill="url(#g1)" stroke="#444"/>
 <g><rect x="56" y="5" width="4" height="4" fill="#1030C0"/><rect x="60" y="5" width="4" height="4" fill="#C01818"/><rect x="64" y="5" width="4" height="4" fill="#10A040"/>
 <rect x="56" y="9" width="4" height="4" fill="#E8C000"/><rect x="60" y="9" width="4" height="4" fill="#2050D0"/><rect x="64" y="9" width="4" height="4" fill="#E02020"/>
 <rect x="56" y="13" width="4" height="4" fill="#20A050"/><rect x="60" y="13" width="4" height="4" fill="#F0E000"/><rect x="64" y="13" width="4" height="4" fill="#A020C0"/></g>
</svg>
<div class="combo" style="left:779px;top:204px;width:164px;height:20px"><div class="dd"></div><span class="ctext" style="left:3px;top:3px;font-size:11px;color:#222">CMYK</span></div>
<div class="a" style="left:782px;top:235px;width:96px;height:105px;background:linear-gradient(90deg,#F6EEEE 0%,#F2A898 28%,#EC6A44 58%,#E83E08 100%)"></div>
<div class="a" style="left:782px;top:235px;width:96px;height:105px;background:linear-gradient(rgba(28,32,34,0) 0%,rgba(28,32,34,.18) 22%,rgba(28,32,34,.45) 48%,rgba(28,32,34,.75) 76%,rgba(28,32,34,.97) 100%)"></div>
<div class="a" style="left:778px;top:232px;width:9px;height:9px;border:1px solid #333;background:#fff"></div>
<div class="a" style="left:887px;top:234px;width:9px;height:106px;background:linear-gradient(#E83A10 0%,#D83468 10%,#A02A90 20%,#5A2290 30%,#3A2090 40%,#1450D0 47%,#10A8E0 52%,#10A060 60%,#18A040 72%,#80C020 80%,#F0E000 85%,#F08000 93%,#E84010 100%)"></div>
<div class="a" style="left:884px;top:338px;width:15px;height:6px;border:1px solid #333;background:#F2DCCB"></div>
<span class="ctext" style="left:898px;top:245px;font-size:11px;color:#333">C</span>
<span class="ctext" style="left:898px;top:272px;font-size:11px;color:#333">M</span>
<span class="ctext" style="left:898px;top:299px;font-size:11px;color:#333">Y</span>
<span class="ctext" style="left:898px;top:326px;font-size:11px;color:#333">K</span>
<div class="combo" style="left:910px;top:241px;width:35px;height:20px"><span class="ctext" style="left:3px;top:2px;font-size:12px">0</span></div>
<div class="combo" style="left:910px;top:268px;width:35px;height:20px"><span class="ctext" style="left:3px;top:2px;font-size:12px">0</span></div>
<div class="combo" style="left:910px;top:295px;width:35px;height:20px"><span class="ctext" style="left:3px;top:2px;font-size:12px">0</span></div>
<div class="combo" style="left:910px;top:322px;width:35px;height:20px"><span class="ctext" style="left:3px;top:2px;font-size:12px">0</span></div>
<div class="a" style="left:777px;top:356px;width:168px;height:1px;background:#C8C4B0"></div>
<div class="a" style="left:777px;top:357px;width:168px;height:1px;background:#fff"></div>
<div class="a" style="left:780px;top:366px;width:17px;height:17px;border:1px solid #3A4A70;border-radius:2px;background:linear-gradient(#C8D0E8,#8A98C0)"></div>
<svg width="17" height="17" style="left:780px;top:366px"><path d="M5 8V5.5c0-2 1.5-3 3.5-3s3.5 1 3.5 3" fill="none" stroke="#333" stroke-width="1.2"/><rect x="4" y="8" width="9" height="6" fill="#555"/></svg>
<div class="a" style="left:831px;top:365px;width:50px;height:18px;border:1px solid #D0CCBC;border-radius:2px;background:#F2F0E6"></div>
<span class="ctext" style="left:837px;top:367px;color:#A8A698;font-size:12px">填充(F)</span>
<div class="a" style="left:890px;top:365px;width:56px;height:18px;border:1px solid #D0CCBC;border-radius:2px;background:#F2F0E6"></div>
<span class="ctext" style="left:896px;top:367px;color:#A8A698;font-size:12px">轮廓(O)</span>


<!-- ===== palette ===== -->
<div class="a" style="left:980px;top:143px;width:20px;height:404px;background:#ECE9D8;border-left:1px solid #D8D4C2"></div>
<div class="a" style="left:984px;top:147px;width:12px;height:2px;background:repeating-linear-gradient(90deg,#A9A594 0 2px,transparent 2px 4px)"></div>
<div class="a" style="left:982px;top:154px;width:16px;height:13px;border-radius:50%;border:1px solid #B5B1A0;background:#fff"></div>
<svg width="8" height="8" style="left:987px;top:157px"><path d="M1 0l5 4-5 4z" fill="#111"/></svg>
<svg width="16" height="10" style="left:982px;top:172px"><path d="M4 8l4-4 4 4" fill="none" stroke="#C8C5B8" stroke-width="1.6"/></svg>
<div class="sw" style="top:185.5px;height:16.6px;background:#fff;border:1px solid #333"></div>
<svg width="18" height="17" style="left:982px;top:185px"><path d="M1 1l16 15M17 1L1 16" stroke="#222" stroke-width="1"/></svg>
<div class="sw" style="top:202.1px;height:16.6px;background:#231F1C"></div>
<div class="sw" style="top:218.7px;height:16.6px;background:#3C3A38"></div>
<div class="sw" style="top:235.3px;height:16.6px;background:#52504E"></div>
<div class="sw" style="top:251.9px;height:16.6px;background:#676564"></div>
<div class="sw" style="top:268.5px;height:16.6px;background:#7D7C7B"></div>
<div class="sw" style="top:285.1px;height:16.6px;background:#939291"></div>
<div class="sw" style="top:301.7px;height:16.6px;background:#A9A8A7"></div>
<div class="sw" style="top:318.3px;height:16.6px;background:#BFBEBE"></div>
<div class="sw" style="top:334.9px;height:16.6px;background:#D3D3D3"></div>
<div class="sw" style="top:351.5px;height:16.6px;background:#E6E6E6"></div>
<div class="sw" style="top:368.1px;height:16.6px;background:#FFFFFF"></div>
<div class="sw" style="top:384.7px;height:16.6px;background:#2E1B7C"></div>
<div class="sw" style="top:401.3px;height:16.6px;background:#fff;border:1px solid #222"><div class="a" style="left:2px;top:2px;width:13px;height:11px;background:#1A8ADA;border:1px solid #333"></div></div>
<div class="sw" style="top:417.9px;height:16.6px;background:#00964E"></div>
<div class="sw" style="top:434.5px;height:16.6px;background:#FFF000"></div>
<div class="sw" style="top:451.1px;height:16.6px;background:#E74414"></div>
<div class="sw" style="top:467.7px;height:16.6px;background:#E8357A"></div>
<div class="sw" style="top:484.3px;height:16.6px;background:#A34882"></div>
<div class="sw" style="top:500.9px;height:16.6px;background:#F28A16"></div>
<div class="sw" style="top:517.5px;height:16.6px;background:#F5A3A0"></div>
<div class="sw" style="top:534.1px;height:16.6px;background:#76695F"></div>

</body></html>
